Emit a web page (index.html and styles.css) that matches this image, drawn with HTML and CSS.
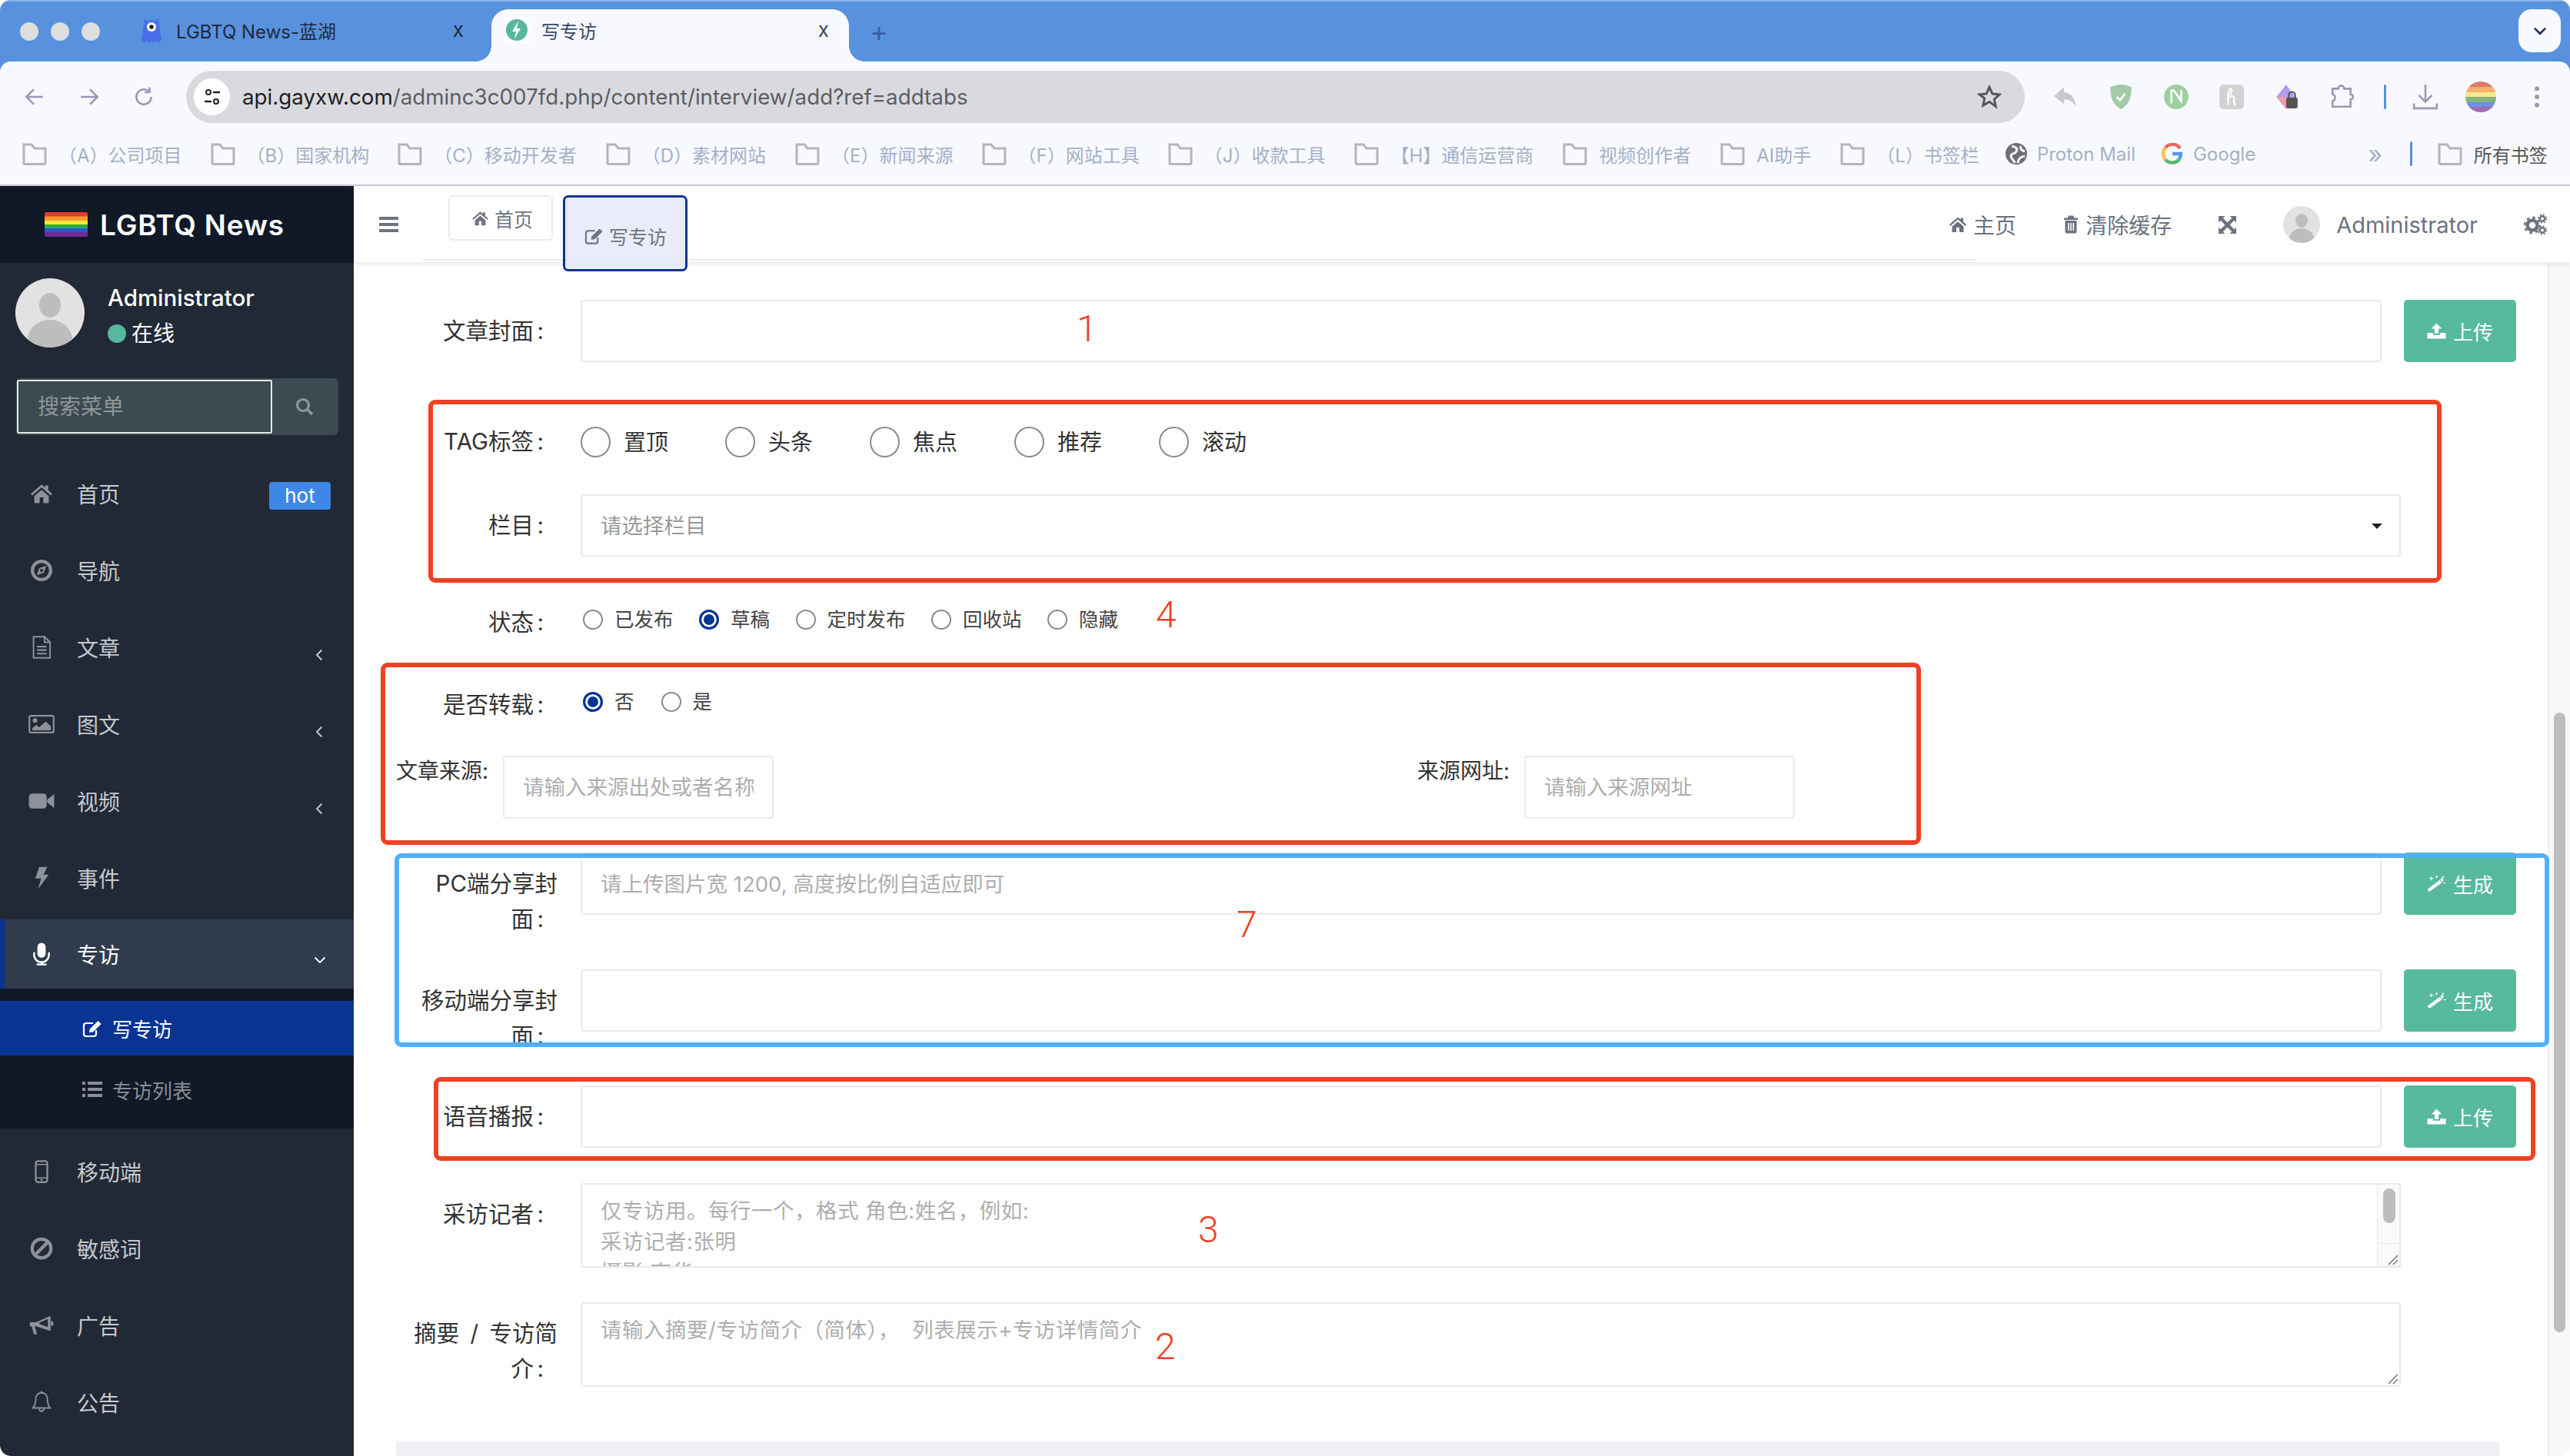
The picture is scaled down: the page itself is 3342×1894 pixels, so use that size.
FILE: index.html
```html
<!DOCTYPE html>
<html lang="zh-CN">
<head>
  <meta charset="UTF-8">
  <title>写专访</title>
  <link rel="stylesheet" href="styles.css">
</head>
<body>
  <svg class="sprite" xmlns="http://www.w3.org/2000/svg">
    <defs>
      <symbol id="i-home" viewBox="0 0 24 24"><path d="M12 2.500 0.800 12.300l1.500 1.700L12 5.600l9.700 8.400 1.500-1.700L19 8.600V3.500h-3.400v2.200z"/><path d="M4.500 14.600V22h5.600v-6h3.800v6h5.600v-7.400L12 8.200z"/></symbol>
      <symbol id="i-compass" viewBox="0 0 24 24"><circle cx="12" cy="12" r="9.500" fill="none" stroke="currentColor" stroke-width="3.400"/><path d="M17 7l-2.600 7.400L7 17l2.600-7.400zM12 10.400a1.600 1.600 0 1 0 0 3.200 1.600 1.600 0 0 0 0-3.200z" fill-rule="evenodd"/></symbol>
      <symbol id="i-file" viewBox="2.500 0.500 19 23"><path d="M4 1.500h11l5.500 5.500v15.500H4z M15 1.500V7h5.500" fill="none" stroke="currentColor" stroke-width="1.500"/><path d="M7.500 10.500h9.500v1.600H7.500zM7.500 14h9.500v1.600H7.500zM7.500 17.500h9.500v1.600H7.500z"/></symbol>
      <symbol id="i-picture" viewBox="0 0 28 20"><rect x="1" y="1" width="26" height="18" rx="1.500" fill="none" stroke="currentColor" stroke-width="1.800"/><circle cx="7" cy="6" r="2.400"/><path d="M4 16.500v-2.200l4.500-3.500 3 2.400 7-6 5.500 5v4.300z"/></symbol>
      <symbol id="i-video" viewBox="0 0 28 18"><rect x="0.500" y="1" width="19" height="16" rx="3.500"/><path d="M20 7.500 27.500 1.500v15L20 10.500z"/></symbol>
      <symbol id="i-bolt" viewBox="0 0 16 24"><path d="M5.500 0.500h8.500L10 8.500h5.500L4.500 23.500 7.500 12.500H1.500z"/></symbol>
      <symbol id="i-mic" viewBox="0 0 24 28"><rect x="7" y="0.500" width="10" height="18" rx="5"/><path d="M3 12v3a9 9 0 0 0 18 0v-3M12 24v2.500M6 26.700h12" fill="none" stroke="currentColor" stroke-width="2.200"/></symbol>
      <symbol id="i-edit" viewBox="0 0 26 24"><path d="M18 14v5a3 3 0 0 1-3 3H5a3 3 0 0 1-3-3V8a3 3 0 0 1 3-3h9" fill="none" stroke="currentColor" stroke-width="2.200"/><path d="M9 17l0.800-4.500L20.500 2l4 4L14 16.500z"/></symbol>
      <symbol id="i-list" viewBox="0 0 26 24"><path d="M0 2h4v4H0zM7 2h19v4H7zM0 10h4v4H0zM7 10h19v4H7zM0 18h4v4H0zM7 18h19v4H7z"/></symbol>
      <symbol id="i-mobile" viewBox="0 0 14 24"><rect x="1" y="1" width="12" height="22" rx="2.400" fill="none" stroke="currentColor" stroke-width="1.800"/><path d="M1 4.500h12M1 18.500h12" stroke="currentColor" stroke-width="1.200"/><circle cx="7" cy="20.800" r="1.100"/></symbol>
      <symbol id="i-ban" viewBox="0 0 24 24"><circle cx="12" cy="12" r="9.800" fill="none" stroke="currentColor" stroke-width="3.400"/><path d="M5.500 18.500 18.500 5.500" stroke="currentColor" stroke-width="3.400"/></symbol>
      <symbol id="i-horn" viewBox="0 0 28 24"><path d="M1 8.500h7L24 1.500v17l-16-5.500H6.500l2.500 9H5.500L3 13H1z"/><path d="M24.500 7c1.800 0 2.800 1.200 2.800 3s-1 3-2.800 3z"/><path d="M21 5 11.500 9v1.500L21 14z" fill="#222936"/></symbol>
      <symbol id="i-bell" viewBox="0 0 24 28"><path d="M12 2.500a7 7 0 0 0-7 7c0 6-1.500 9-3.500 11.500h21C20.500 18.500 19 15.500 19 9.500a7 7 0 0 0-7-7z" fill="none" stroke="currentColor" stroke-width="1.800"/><path d="M12 0.500v2.500M9 22a3 3 0 0 0 6 0" fill="none" stroke="currentColor" stroke-width="1.800"/></symbol>
      <symbol id="i-trash" viewBox="0 0 20 24"><path d="M7 0.500h6l1.500 3H19V6H1V3.500h4.500z"/><path d="M2.500 7h15v14a2.500 2.500 0 0 1-2.500 2.500H5A2.500 2.500 0 0 1 2.500 21zM6 10v10h1.600V10zM9.200 10v10h1.600V10zM12.400 10v10H14V10z" fill-rule="evenodd"/></symbol>
      <symbol id="i-expand" viewBox="0 0 24 24"><path d="M1 1h8L6.500 3.500 20.500 17.500 23 15v8h-8l2.500-2.500L3.500 6.500 1 9z"/><path d="M23 1v8l-2.500-2.500L6.500 20.500 9 23H1v-8l2.500 2.500L17.500 3.500 15 1z"/></symbol>
      <symbol id="i-cogs" viewBox="0 0 30 28"><circle cx="11" cy="15" r="6.500" fill="none" stroke="currentColor" stroke-width="4.500"/><circle cx="11" cy="15" r="10" fill="none" stroke="currentColor" stroke-width="2.800" stroke-dasharray="3.500 4.350"/><circle cx="24" cy="6.500" r="3.200" fill="none" stroke="currentColor" stroke-width="2.400"/><circle cx="24" cy="6.500" r="5.200" fill="none" stroke="currentColor" stroke-width="1.800" stroke-dasharray="2 2.100"/><circle cx="24" cy="21.500" r="3.200" fill="none" stroke="currentColor" stroke-width="2.400"/><circle cx="24" cy="21.500" r="5.200" fill="none" stroke="currentColor" stroke-width="1.800" stroke-dasharray="2 2.100"/></symbol>
      <symbol id="i-upload" viewBox="0 0 24 20"><path d="M12 0.500l6.500 6.500h-4v6h-5V7h-4z"/><path d="M0.500 12.500h7V15h9v-2.500h7V19.500H0.500z"/></symbol>
      <symbol id="i-magic" viewBox="0 0 24 20"><path d="M0.500 17l15.500-11.500 3 3L3 20z"/><path d="M16.500 4.500l2-1.500 2.500 2.500-1.500 2z"/><path d="M3 3.500h5M5.500 1v5M10.500 1.500h3M12 0v3M20 0.500v3M18.500 2h3M20.500 9h3" stroke="currentColor" stroke-width="1"/></symbol>
      <symbol id="i-search" viewBox="0 0 24 24"><circle cx="10" cy="10" r="7.500" fill="none" stroke="currentColor" stroke-width="3.200"/><path d="M15.500 15.500 22 22" stroke="currentColor" stroke-width="3.800"/></symbol>
      <symbol id="i-folder" viewBox="0 0 32 30"><path d="M2 27V3h10l4 5h14v19a1.500 1.500 0 0 1-1.500 1.500h-25A1.500 1.500 0 0 1 2 27z" fill="none" stroke="currentColor" stroke-width="3"/></symbol>
      <symbol id="i-chev-left" viewBox="0 0 10 16"><path d="M8.500 1.500 2 8l6.500 6.500" fill="none" stroke="currentColor" stroke-width="1.800"/></symbol>
      <symbol id="i-chev-down" viewBox="0 0 16 10"><path d="M1.500 1.500 8 8l6.500-6.500" fill="none" stroke="currentColor" stroke-width="1.800"/></symbol>
      <symbol id="i-flag" viewBox="0 0 56 32"><path fill="#e63a2e" d="M0 2a2 2 0 0 1 2-2h52a2 2 0 0 1 2 2v4H0z"/><path fill="#f39a28" d="M0 5.500h56v6H0z"/><path fill="#f5e63a" d="M0 11h56v5.500H0z"/><path fill="#2fa84a" d="M0 16h56v5.500H0z"/><path fill="#2b55d6" d="M0 21h56v5.500H0z"/><path fill="#6f2a94" d="M0 26h56v4a2 2 0 0 1-2 2H2a2 2 0 0 1-2-2z"/></symbol>
    </defs>
  </svg>

  <div class="window">
    <div class="tabstrip">
      <div class="lights"><span></span><span></span><span></span></div>
      <div class="ctab">
        <svg class="fav" viewBox="0 0 26 36"><path fill="#4a6ee8" d="M4 3l4 4a8 8 0 0 1 10 0l4-4 1 8 3 20-4 4-3-3-3 3-3-3-3 3-3-3-3 3-4-4L3 11z"/><circle cx="13" cy="14" r="6" fill="#fff"/><circle cx="13" cy="14" r="2.800" fill="#222"/></svg>
        <span class="ctab-title">LGBTQ News-蓝湖</span>
        <span class="ctab-x">x</span>
      </div>
      <div class="ctab ctab-on">
        <svg class="fav fav-sq" viewBox="0 0 30 36"><rect width="30" height="36" fill="#fff"/><circle cx="15" cy="18" r="14" fill="#56b89c"/><path fill="#fff" d="M17 6l-8 14h5l-2 10 8-14h-5z"/></svg>
        <span class="ctab-title">写专访</span>
        <span class="ctab-x">x</span>
      </div>
      <span class="newtab">+</span>
      <span class="tabmenu"><svg viewBox="0 0 16 10"><path d="M1.500 1.500 8 8l6.500-6.500" fill="none" stroke="#22345c" stroke-width="2.400"/></svg></span>
    </div>

    <div class="chrome">
      <div class="toolbar">
        <svg class="nav-ico" viewBox="0 0 26 26"><path d="M23 13H4M12 4l-9 9 9 9" fill="none" stroke="#9a98b4" stroke-width="2.400"/></svg>
        <svg class="nav-ico" viewBox="0 0 26 26"><path d="M3 13h19M14 4l9 9-9 9" fill="none" stroke="#9a98b4" stroke-width="2.400"/></svg>
        <svg class="nav-ico" viewBox="0 0 26 26"><path d="M22 13a9 9 0 1 1-3-6.700M20 1.500v6h-6" fill="none" stroke="#9a98b4" stroke-width="2.400"/></svg>
        <div class="omnibox">
          <span class="site-ico"><svg viewBox="0 0 24 24"><circle cx="7" cy="6" r="3" fill="none" stroke="#222" stroke-width="2"/><path d="M13 6h9M2 18h9" stroke="#222" stroke-width="2.400"/><circle cx="17" cy="18" r="3" fill="none" stroke="#222" stroke-width="2"/></svg></span>
          <span class="url"><b>api.gayxw.com</b>/adminc3c007fd.php/content/interview/add?ref=addtabs</span>
          <svg class="star" viewBox="0 0 24 24"><path d="M12 2.500l2.900 6.400 6.900.8-5.100 4.700 1.400 6.900L12 16.800l-6.100 3.500 1.400-6.900L2.200 9.700l6.900-.8z" fill="none" stroke="#555" stroke-width="2.200"/></svg>
        </div>
        <div class="exts">
          <svg class="ext" viewBox="0 0 32 32"><path fill="#c9c9cb" d="M14 4 2 15l12 10v-6c7 0 11 3 15 9-1-10-6-17-15-18z"/></svg>
          <svg class="ext" viewBox="0 0 32 32"><path fill="#a3cba6" d="M16 1c5 0 10 2 13 3 0 12-3 22-13 27C6 26 3 16 3 4c3-1 8-3 13-3z"/><path d="M11 16l4 4 6-8" fill="none" stroke="#fff" stroke-width="2.400"/></svg>
          <svg class="ext" viewBox="0 0 32 32"><circle cx="16" cy="16" r="15" fill="#9fcf9e"/><path d="M9 8h4l9 13V8M10 8v16" fill="none" stroke="#fff" stroke-width="2.400"/></svg>
          <svg class="ext" viewBox="0 0 32 32"><rect x="1" y="1" width="30" height="30" rx="5" fill="#d2d2d2"/><path d="M14 6c-3 5-3 14-2 20M12 18c3-4 7-4 7 0 0 3-1 6 2 8M14 6c3 0 3 5-1 8" fill="none" stroke="#fff" stroke-width="2"/></svg>
          <svg class="ext" viewBox="0 0 32 32"><path fill="#b49cf2" d="M15 1l11 15-11 15L3 16z"/><path fill="#f29ca8" d="M3 16l12 15V16z"/><rect x="15" y="17" width="14" height="13" rx="2" fill="#555"/><path d="M18 17v-3a4 4 0 0 1 8 0v3" fill="none" stroke="#555" stroke-width="2"/></svg>
          <svg class="ext" viewBox="0 0 32 32"><path d="M4 6h7c0-5 7-5 7 0h8v7c4 0 4 6 0 6v9H4v-7c4 0 4-8 0-8z" fill="none" stroke="#9a98b4" stroke-width="2.400"/></svg>
          <span class="tool-sep"></span>
          <svg class="ext" viewBox="0 0 32 32"><path d="M16 1v21M8 14l8 8 8-8M2 24v6h28v-6" fill="none" stroke="#9a98b4" stroke-width="2.400"/></svg>
          <svg class="ext ext-wide" viewBox="0 0 40 40"><defs><clipPath id="ball"><circle cx="20" cy="20" r="20"/></clipPath></defs><g clip-path="url(#ball)"><rect width="40" height="7" fill="#e0786c"/><rect y="7" width="40" height="7" fill="#f2b06e"/><rect y="14" width="40" height="6" fill="#f4ea8e"/><rect y="20" width="40" height="7" fill="#85b47c"/><rect y="27" width="40" height="7" fill="#6d8fe8"/><rect y="33" width="40" height="7" fill="#a06cb4"/></g></svg>
          <svg class="ext" viewBox="0 0 32 32"><circle cx="16" cy="6" r="2.800" fill="#9a98b4"/><circle cx="16" cy="16" r="2.800" fill="#9a98b4"/><circle cx="16" cy="26" r="2.800" fill="#9a98b4"/></svg>
        </div>
      </div>

      <div class="bookmarks">
        <a class="bm bm-a"><svg class="bm-ico"><use href="#i-folder"/></svg>（A）公司项目</a>
        <a class="bm bm-b"><svg class="bm-ico"><use href="#i-folder"/></svg>（B）国家机构</a>
        <a class="bm bm-c"><svg class="bm-ico"><use href="#i-folder"/></svg>（C）移动开发者</a>
        <a class="bm bm-d"><svg class="bm-ico"><use href="#i-folder"/></svg>（D）素材网站</a>
        <a class="bm bm-e"><svg class="bm-ico"><use href="#i-folder"/></svg>（E）新闻来源</a>
        <a class="bm bm-f"><svg class="bm-ico"><use href="#i-folder"/></svg>（F）网站工具</a>
        <a class="bm bm-j"><svg class="bm-ico"><use href="#i-folder"/></svg>（J）收款工具</a>
        <a class="bm bm-h"><svg class="bm-ico"><use href="#i-folder"/></svg>【H】通信运营商</a>
        <a class="bm bm-v"><svg class="bm-ico"><use href="#i-folder"/></svg>视频创作者</a>
        <a class="bm bm-ai"><svg class="bm-ico"><use href="#i-folder"/></svg>AI助手</a>
        <a class="bm bm-l"><svg class="bm-ico"><use href="#i-folder"/></svg>（L）书签栏</a>
        <a class="bm bm-p"><svg class="bm-fav" viewBox="0 0 28 28"><circle cx="14" cy="14" r="14" fill="#6f6f72"/><path d="M8 4c5 1 8 3 6 7s-7 2-7 6 4 5 5 9M20 4c-2 4 2 6 5 7M16 26c0-4 3-8 9-9" fill="none" stroke="#f7f9fe" stroke-width="3"/></svg>Proton Mail</a>
        <a class="bm bm-g"><svg class="bm-fav" viewBox="0 0 28 28"><path d="M24 7A12 12 0 0 0 5 6" fill="none" stroke="#ea6a5e" stroke-width="4.500"/><path d="M5 6a12 12 0 0 0 0 16" fill="none" stroke="#f2c34e" stroke-width="4.500"/><path d="M5 22a12 12 0 0 0 18-1" fill="none" stroke="#5cb872" stroke-width="4.500"/><path d="M14 14h11c0 3-1 5-2 7" fill="none" stroke="#5f94ee" stroke-width="4.500"/></svg>Google</a>
        <span class="bm-more">»</span>
        <span class="bm-sep"></span>
        <a class="bm bm-all"><svg class="bm-ico"><use href="#i-folder"/></svg>所有书签</a>
      </div>
    </div>

    <div class="admin">
      <aside class="sidebar">
        <div class="logo"><svg class="flag"><use href="#i-flag"/></svg><span>LGBTQ News</span></div>
        <div class="userpanel">
          <svg class="avatar" viewBox="0 0 90 90"><defs><clipPath id="av1"><circle cx="45" cy="45" r="45"/></clipPath></defs><g clip-path="url(#av1)"><rect width="90" height="90" fill="#e2e2e2"/><ellipse cx="45" cy="35" rx="14" ry="16" fill="#bdbdbd"/><ellipse cx="45" cy="80" rx="29" ry="26" fill="#bdbdbd"/></g></svg>
          <div class="userinfo">
            <div class="username">Administrator</div>
            <div class="online"><i></i>在线</div>
          </div>
        </div>
        <div class="sidesearch">
          <input type="text" placeholder="搜索菜单">
          <svg class="sidesearch-ico"><use href="#i-search"/></svg>
        </div>
        <ul class="menu">
          <li class="item"><svg class="mi"><use href="#i-home"/></svg><span>首页</span><em class="hot">hot</em></li>
          <li class="item"><svg class="mi"><use href="#i-compass"/></svg><span>导航</span></li>
          <li class="item"><svg class="mi"><use href="#i-file"/></svg><span>文章</span><svg class="chev"><use href="#i-chev-left"/></svg></li>
          <li class="item"><svg class="mi mi-wide"><use href="#i-picture"/></svg><span>图文</span><svg class="chev"><use href="#i-chev-left"/></svg></li>
          <li class="item"><svg class="mi mi-wide"><use href="#i-video"/></svg><span>视频</span><svg class="chev"><use href="#i-chev-left"/></svg></li>
          <li class="item"><svg class="mi"><use href="#i-bolt"/></svg><span>事件</span></li>
          <li class="item item-on"><svg class="mi"><use href="#i-mic"/></svg><span>专访</span><svg class="chev-d"><use href="#i-chev-down"/></svg></li>
          <li class="submenu">
            <div class="sub sub-on"><svg class="si"><use href="#i-edit"/></svg>写专访</div>
            <div class="sub"><svg class="si"><use href="#i-list"/></svg>专访列表</div>
          </li>
          <li class="item item-after"><svg class="mi"><use href="#i-mobile"/></svg><span>移动端</span></li>
          <li class="item"><svg class="mi"><use href="#i-ban"/></svg><span>敏感词</span></li>
          <li class="item"><svg class="mi mi-wide"><use href="#i-horn"/></svg><span>广告</span></li>
          <li class="item"><svg class="mi"><use href="#i-bell"/></svg><span>公告</span></li>
        </ul>
      </aside>

      <main class="main">
        <header class="navbar">
          <svg class="burger" viewBox="0 0 25 20"><path d="M0 0h25v4H0zM0 8h25v4H0zM0 16h25v4H0z"/></svg>
          <div class="pagetabs">
            <span class="ptab"><svg class="ptab-ico"><use href="#i-home"/></svg>首页</span>
            <span class="ptab ptab-on"><svg class="ptab-ico"><use href="#i-edit"/></svg>写专访</span>
          </div>
          <nav class="navright">
            <span class="nr nr-home"><svg class="nr-ico"><use href="#i-home"/></svg>主页</span>
            <span class="nr nr-clear"><svg class="nr-ico nr-ico-trash"><use href="#i-trash"/></svg>清除缓存</span>
            <svg class="nr-full"><use href="#i-expand"/></svg>
            <svg class="nr-avatar" viewBox="0 0 48 48"><defs><clipPath id="av2"><circle cx="24" cy="24" r="24"/></clipPath></defs><g clip-path="url(#av2)"><rect width="48" height="48" fill="#e2e2e2"/><ellipse cx="24" cy="19" rx="8" ry="9" fill="#bdbdbd"/><ellipse cx="24" cy="43" rx="16" ry="14" fill="#bdbdbd"/></g></svg>
            <span class="nr nr-user">Administrator</span>
            <svg class="nr-cogs"><use href="#i-cogs"/></svg>
          </nav>
        </header>

        <div class="body">
          <form class="form">
            <div class="row row-cover">
              <label class="lb">文章封面<i class="co">:</i></label>
              <input class="ctl" type="text">
              <button class="btn" type="button"><svg class="btn-ico"><use href="#i-upload"/></svg>上传</button>
            </div>

            <div class="row row-tag row-mid">
              <label class="lb lb-flat lb-tag">TAG标签<i class="co">:</i></label>
              <div class="opts-big">
                <label class="opt"><input type="radio" name="tag">置顶</label>
                <label class="opt"><input type="radio" name="tag">头条</label>
                <label class="opt"><input type="radio" name="tag">焦点</label>
                <label class="opt"><input type="radio" name="tag">推荐</label>
                <label class="opt"><input type="radio" name="tag">滚动</label>
              </div>
            </div>

            <div class="row row-col">
              <label class="lb">栏目<i class="co">:</i></label>
              <div class="selectwrap">
                <select class="ctl"><option>请选择栏目</option></select>
              </div>
            </div>

            <div class="row row-status row-mid">
              <label class="lb lb-flat lb-low">状态<i class="co">:</i></label>
              <div class="opts">
                <label class="opt"><input type="radio" name="status">已发布</label>
                <label class="opt"><input type="radio" name="status" checked>草稿</label>
                <label class="opt"><input type="radio" name="status">定时发布</label>
                <label class="opt"><input type="radio" name="status">回收站</label>
                <label class="opt"><input type="radio" name="status">隐藏</label>
              </div>
            </div>

            <div class="row row-repost row-mid">
              <label class="lb lb-flat lb-low">是否转载<i class="co">:</i></label>
              <div class="opts opts-wide">
                <label class="opt"><input type="radio" name="repost" checked>否</label>
                <label class="opt"><input type="radio" name="repost">是</label>
              </div>
            </div>

            <div class="row row-source">
              <div class="srccol">
                <label class="lb-src">文章来源:</label>
                <input class="ctl ctl-src" type="text" placeholder="请输入来源出处或者名称">
              </div>
              <div class="srccol">
                <label class="lb-src">来源网址:</label>
                <input class="ctl ctl-src" type="text" placeholder="请输入来源网址">
              </div>
            </div>

            <div class="row row-pc">
              <label class="lb">PC端分享封<br>面<i class="co">:</i></label>
              <input class="ctl" type="text" placeholder="请上传图片宽 1200, 高度按比例自适应即可">
              <button class="btn" type="button"><svg class="btn-ico"><use href="#i-magic"/></svg>生成</button>
            </div>

            <div class="row row-mobile">
              <label class="lb">移动端分享封<br>面<i class="co">:</i></label>
              <input class="ctl" type="text">
              <button class="btn" type="button"><svg class="btn-ico"><use href="#i-magic"/></svg>生成</button>
            </div>

            <div class="row row-audio">
              <label class="lb">语音播报<i class="co">:</i></label>
              <input class="ctl" type="text">
              <button class="btn" type="button"><svg class="btn-ico"><use href="#i-upload"/></svg>上传</button>
            </div>

            <div class="row row-reporter">
              <label class="lb">采访记者<i class="co">:</i></label>
              <div class="areawrap">
                <textarea class="ctl area" placeholder="仅专访用。每行一个，格式 角色:姓名，例如:&#10;采访记者:张明&#10;摄影:李华"></textarea>
                <div class="area-bar"><span class="area-thumb"></span></div>
                <svg class="grip" viewBox="0 0 14 14"><path d="M13 1 1 13M13 7l-6 6" stroke="#666" stroke-width="1.300"/></svg>
              </div>
            </div>

            <div class="row row-summary">
              <label class="lb lb-summary">摘要 / 专访简<br>介<i class="co">:</i></label>
              <div class="areawrap">
                <textarea class="ctl area" placeholder="请输入摘要/专访简介（简体），  列表展示+专访详情简介"></textarea>
                <svg class="grip" viewBox="0 0 14 14"><path d="M13 1 1 13M13 7l-6 6" stroke="#666" stroke-width="1.300"/></svg>
              </div>
            </div>

            <div class="footbar"></div>
          </form>
          <div class="pagebar"><span class="pagebar-thumb"></span></div>
        </div>
      </main>
    </div>

    <!-- hand-drawn review marks on top of the screenshot -->
    <div class="mark mark-tag"></div>
    <div class="mark mark-repost"></div>
    <div class="mark mark-blue"></div>
    <div class="mark mark-audio"></div>
    <span class="num num-1">1</span>
    <span class="num num-4">4</span>
    <span class="num num-7">7</span>
    <span class="num num-3">3</span>
    <span class="num num-2">2</span>
  </div>
</body>
</html>
```

FILE: styles.css
```css
/* Page and window */
* {
  box-sizing: border-box;
}

body {
  margin: 0;
  background: #ffffff;
  font-family: Inter, "Noto Sans CJK SC", sans-serif;
  color: #333333;
}

ul {
  list-style: none;
  margin: 0;
  padding: 0;
}

.sprite {
  position: absolute;
  width: 0;
  height: 0;
}

svg {
  fill: currentColor;
  flex: none;
}

.window {
  position: relative;
  width: 3342px;
  height: 1894px;
  overflow: hidden;
  border-radius: 14px;
  background: #ffffff;
}

/* Browser tab strip */
.tabstrip {
  display: flex;
  align-items: flex-end;
  height: 94px;
  margin-bottom: -14px;
  padding-bottom: 14px;
  background: #5891de;
  border-top: 2px solid #8db3ec;
}

.lights {
  display: flex;
  gap: 16px;
  align-self: flex-start;
  margin: 27px 0 0 26px;
}

.lights span {
  width: 24px;
  height: 24px;
  border-radius: 50%;
  background: #dedede;
}

.ctab {
  display: flex;
  align-items: center;
  width: 473px;
  height: 68px;
  padding: 0 36px 14px 18px;
  font-size: 24px;
  color: #1f2a3c;
}

.lights + .ctab {
  margin-left: 36px;
}

.ctab-on {
  position: relative;
  width: 465px;
  padding-right: 26px;
  background: #f7f9fe;
  border-radius: 22px 22px 0 0;
  color: #3a4a68;
}

.ctab-on::before,
.ctab-on::after {
  content: "";
  position: absolute;
  bottom: 0;
  width: 20px;
  height: 20px;
}

.ctab-on::before {
  left: -20px;
  background: radial-gradient(circle at 0 0, transparent 19.5px, #f7f9fe 20px);
}

.ctab-on::after {
  right: -20px;
  background: radial-gradient(circle at 100% 0, transparent 19.5px, #f7f9fe 20px);
}

.fav {
  width: 26px;
  height: 36px;
  margin-right: 19px;
}

.fav-sq {
  width: 30px;
  margin-right: 17px;
}

.ctab-title {
  flex: 1;
}

.ctab-x {
  font-size: 26px;
  line-height: 1;
}

.newtab {
  align-self: flex-start;
  margin: 19px 0 0 27px;
  font-size: 36px;
  line-height: 40px;
  color: #3a5ea8;
}

.tabmenu {
  display: flex;
  align-items: center;
  justify-content: center;
  align-self: flex-start;
  width: 55px;
  height: 56px;
  margin: 10px 12px 0 auto;
  background: #f7f9fe;
  border-radius: 17px;
}

.tabmenu svg {
  width: 18px;
  height: 11px;
}

/* Toolbar and bookmarks */
.chrome {
  position: relative;
  height: 162px;
  background: #f7f9fe;
  border-radius: 14px 14px 0 0;
  border-bottom: 2px solid #c9c7d9;
}

.toolbar {
  display: flex;
  align-items: center;
  height: 92px;
  padding-left: 31px;
}

.nav-ico {
  width: 28px;
  height: 28px;
  margin-right: 43px;
}

.nav-ico:nth-child(3) {
  margin-right: 0;
}

.omnibox {
  display: flex;
  align-items: center;
  flex: none;
  width: 2391px;
  height: 68px;
  margin-left: 41px;
  padding: 0 30px 0 10px;
  border-radius: 34px;
  background: #d9dadf;
}

.site-ico {
  display: flex;
  align-items: center;
  justify-content: center;
  width: 47px;
  height: 48px;
  border-radius: 50%;
  background: #ffffff;
}

.site-ico svg {
  width: 24px;
  height: 24px;
}

.url {
  flex: 1;
  margin-left: 16px;
  font-size: 27.75px;
  color: #5c5d62;
}

.url b {
  font-weight: 400;
  color: #1e1e22;
}

.star {
  width: 32px;
  height: 32px;
}

.exts {
  display: flex;
  align-items: center;
  flex: none;
  margin-left: 36px;
}

.ext {
  width: 34px;
  height: 34px;
  margin-right: 38px;
}

.ext-wide {
  width: 40px;
  height: 40px;
  margin-left: -3px;
  margin-right: 36px;
}

.tool-sep {
  width: 3px;
  height: 32px;
  margin: 0 34px 0 -1px;
  background: #5891de;
  border-radius: 2px;
}

.bookmarks {
  display: flex;
  align-items: center;
  height: 68px;
  padding: 0 0 12px 29px;
  font-size: 24px;
  color: #a5b0c6;
}

.bm {
  display: flex;
  align-items: center;
  white-space: nowrap;
}

.bm-ico {
  width: 32px;
  height: 30px;
  margin-right: 15px;
  color: #b4b5ba;
}

.bm-fav {
  width: 28px;
  height: 28px;
  margin-right: 13px;
}

.bm-b { margin-left: 37px; }
.bm-c { margin-left: 37px; }
.bm-d { margin-left: 38px; }
.bm-e { margin-left: 38px; }
.bm-f { margin-left: 37px; }
.bm-j { margin-left: 37px; }
.bm-h { margin-left: 38px; }
.bm-v { margin-left: 38px; }
.bm-ai { margin-left: 38px; }
.bm-l { margin-left: 38px; }
.bm-p { margin-left: 34px; }
.bm-g { margin-left: 34px; }

.bm-more {
  margin-left: 146px;
  font-size: 32px;
  color: #a5b0c6;
}

.bm-sep {
  width: 3px;
  height: 32px;
  margin-left: 36px;
  background: #5891de;
  border-radius: 2px;
}

.bm-all {
  margin-left: 33px;
  color: #555555;
}

/* Admin layout */
.admin {
  display: flex;
  height: 1652px;
}

.sidebar {
  width: 460px;
  flex: none;
  background: #222936;
  border-radius: 0 0 0 14px;
  overflow: hidden;
  color: #c6c9cf;
}

.logo {
  display: flex;
  align-items: center;
  height: 100px;
  padding-left: 58px;
  background: #111827;
  font-size: 37px;
  font-weight: 600;
  letter-spacing: 0.8px;
  color: #ffffff;
}

.flag {
  width: 56px;
  height: 32px;
  margin-right: 16px;
}

.userpanel {
  display: flex;
  align-items: center;
  gap: 30px;
  height: 90px;
  margin: 20px 0 0 20px;
}

.userinfo {
  padding-top: 7px;
}

.avatar {
  width: 90px;
  height: 90px;
}

.username {
  font-size: 29.5px;
  line-height: 38px;
  font-weight: 500;
  color: #ffffff;
}

.online {
  display: flex;
  align-items: center;
  gap: 7px;
  margin-top: 9px;
  font-size: 28px;
  line-height: 38px;
  color: #ffffff;
}

.online i {
  width: 24px;
  height: 24px;
  border-radius: 50%;
  background: #56b89c;
}

.sidesearch {
  display: flex;
  align-items: center;
  width: 419px;
  height: 74px;
  margin: 40px 0 26px 21px;
  padding: 2px 0 2px 1px;
  border-radius: 6px;
  background: #3c4a52;
}

.sidesearch input {
  width: 332px;
  height: 70px;
  padding: 0 25px;
  border: 2px solid #e6e6e6;
  border-radius: 2px;
  outline: none;
  background: transparent;
  font: 28px Inter, "Noto Sans CJK SC", sans-serif;
}

.sidesearch input::placeholder {
  color: #8f9696;
}

.sidesearch-ico {
  width: 24px;
  height: 24px;
  margin-left: 30px;
  color: #8f9696;
}

.item {
  position: relative;
  display: flex;
  align-items: center;
  height: 100px;
  padding-left: 30px;
  font-size: 28px;
}

.mi {
  width: 30px;
  height: 30px;
  margin: 0 31px 0 9px;
  color: #8d9198;
}

.mi-wide {
  width: 34px;
  height: 28px;
  margin: 0 29px 0 7px;
}

.hot {
  position: absolute;
  right: 30px;
  top: 35px;
  width: 80px;
  height: 36px;
  border-radius: 4px;
  background: #3d87e6;
  font-style: normal;
  font-size: 26px;
  line-height: 35px;
  text-align: center;
  color: #ffffff;
}

.chev {
  position: absolute;
  left: 410px;
  top: 52px;
  width: 10px;
  height: 16px;
}

.item-on {
  height: 90px;
  margin-top: 4px;
  background: #303c4d;
  border-left: 6px solid #0a3494;
  padding-left: 24px;
  color: #ffffff;
}

.item-on .mi {
  color: #ffffff;
}

.chev-d {
  position: absolute;
  left: 402px;
  top: 48px;
  width: 16px;
  height: 10px;
}

.submenu {
  padding: 16px 0 0;
  height: 182px;
  background: #111827;
}

.sub {
  display: flex;
  align-items: center;
  height: 71px;
  padding-left: 107px;
  font-size: 26px;
  color: #8a8e96;
}

.sub + .sub {
  height: 88px;
}

.sub-on {
  background: #0a3494;
  color: #ffffff;
}

.si {
  width: 26px;
  height: 24px;
  margin-right: 13px;
}

.item-after {
  margin-top: 6px;
}

/* Top bar of the admin page */
.main {
  display: flex;
  flex-direction: column;
  flex: 1;
  min-width: 0;
}

.navbar {
  position: relative;
  display: flex;
  align-items: flex-start;
  height: 100px;
  flex: none;
  border-bottom: 1px solid #eceef2;
  box-shadow: 0 3px 5px rgba(0, 0, 0, 0.06);
  color: #6f7580;
}

.navbar::after {
  content: "";
  position: absolute;
  left: 90px;
  bottom: 2px;
  width: 2019px;
  height: 2px;
  background: #e8e9ee;
}

.burger {
  width: 25px;
  height: 20px;
  margin: 40px 0 0 33px;
  color: #6b7280;
}

.pagetabs {
  display: flex;
  gap: 13px;
  margin: 12px 0 0 65px;
}

.ptab {
  display: flex;
  align-items: center;
  height: 59px;
  padding: 0 24px 0 28px;
  border: 2px solid #e9eaef;
  border-radius: 6px;
  font-size: 25px;
}

.ptab-ico {
  width: 23px;
  height: 22px;
  margin-right: 7px;
}

.ptab-on {
  position: relative;
  z-index: 1;
  height: 99px;
  padding: 6px 24px 0 25px;
  border: 3px solid #0a3494;
  background: rgba(226, 231, 247, 0.75);
  border-radius: 7px;
}

.ptab-on .ptab-ico {
  width: 25px;
  height: 26px;
}

.navright {
  display: flex;
  align-items: center;
  height: 100px;
  margin-left: auto;
  padding: 0 30px 0 0;
  font-size: 28px;
  color: #6b7280;
}

.nr {
  display: flex;
  align-items: center;
}

.nr-ico {
  width: 24px;
  height: 24px;
  margin-right: 8px;
}

.nr-ico-trash {
  width: 20px;
  margin-right: 9px;
}

.nr-clear {
  margin-left: 61px;
}

.nr-full {
  width: 25px;
  height: 25px;
  margin-left: 60px;
}

.nr-avatar {
  width: 48px;
  height: 48px;
  margin-left: 60px;
}

.nr-user {
  margin-left: 21px;
  font-size: 29px;
}

.nr-cogs {
  width: 30px;
  height: 28px;
  margin-left: 60px;
}

/* Form */
.body {
  display: flex;
  flex: 1;
  min-height: 0;
}

.form {
  flex: 1;
  padding: 48px 41px 0 55px;
  overflow: hidden;
}

.row {
  display: flex;
  align-items: flex-start;
}

.row-mid {
  align-items: center;
}

.row-tag { margin-top: 82px; height: 40px; }
.row-col { margin-top: 50px; }
.row-status { margin-top: 66px; height: 26px; }
.row-repost { margin-top: 81px; height: 26px; }
.row-source { margin-top: 60px; }
.row-pc { margin-top: 44px; }
.row-mobile { margin-top: 71px; }
.row-audio { margin-top: 70px; }
.row-reporter { margin-top: 46px; }
.row-summary { margin-top: 45px; }

.row-mobile,
.row-pc,
.row-audio,
.row-cover {
  height: 81px;
}

.lb {
  flex: none;
  width: 210px;
  margin-right: 30px;
  padding-top: 17px;
  font-size: 29.5px;
  line-height: 46px;
  text-align: right;
  color: #333333;
}

.lb-flat {
  padding-top: 0;
}

.lb-tag {
  padding-top: 2px;
}

.lb-low {
  padding-top: 11px;
}

.lb-summary {
  word-spacing: 6px;
}

.co {
  display: inline-block;
  width: 11px;
  margin-right: 18px;
  margin-left: 2px;
  font-style: normal;
  text-align: right;
}

.ctl {
  flex: 1;
  min-width: 0;
  height: 81px;
  padding: 0 24px;
  border: 2px solid #e8e9ee;
  border-radius: 4px;
  outline: none;
  background: #ffffff;
  font: 27.5px Inter, "Noto Sans CJK SC", sans-serif;
  color: #999999;
}

.ctl::placeholder {
  color: #aeaeae;
}

.btn {
  display: flex;
  align-items: center;
  justify-content: center;
  flex: none;
  width: 146px;
  height: 81px;
  margin-left: 29px;
  border: none;
  border-radius: 5px;
  background: #57b99e;
  font: 26px Inter, "Noto Sans CJK SC", sans-serif;
  color: #ffffff;
}

.btn-ico {
  width: 25px;
  height: 21px;
  margin-right: 9px;
}

.selectwrap {
  position: relative;
  flex: 1;
  display: flex;
  margin-right: 150px;
}

.selectwrap::after {
  content: "";
  position: absolute;
  right: 24px;
  top: 38px;
  border: 7px solid transparent;
  border-top-color: #222222;
  border-bottom: none;
}

.selectwrap select {
  width: 100%;
  appearance: none;
}

input[type="radio"] {
  appearance: none;
  flex: none;
  margin: 0;
  border: 2px solid #8a8a8a;
  border-radius: 50%;
  background: #ffffff;
}

input[type="radio"]:checked {
  border: 3px solid #0a3494;
  box-shadow: inset 0 0 0 3px #ffffff;
  background: #0a3494;
}

.opt {
  display: flex;
  align-items: center;
  font-size: 25.5px;
  color: #444444;
}

.opts-big {
  display: flex;
}

.opts-big .opt {
  width: 188px;
  font-size: 29px;
  color: #333333;
}

.opts-big input[type="radio"] {
  width: 39px;
  height: 40px;
  margin: 4px 17px 0 0;
}

.opts {
  display: flex;
  gap: 33.5px;
  margin-left: 3px;
}

.opts-wide {
  gap: 35px;
}

.opts input[type="radio"] {
  width: 26px;
  height: 26px;
  margin: 6px 15px 0 0;
}

.srccol {
  display: flex;
  align-items: flex-start;
  width: 1328px;
}

.lb-src {
  flex: none;
  width: 122px;
  margin-right: 17px;
  font-size: 28px;
  line-height: 40px;
  white-space: nowrap;
}

.ctl-src {
  flex: none;
  width: 352px;
  height: 82px;
}

.areawrap {
  position: relative;
  flex: 1;
  display: flex;
  margin-right: 150px;
}

.area {
  display: block;
  width: 100%;
  height: 110px;
  padding: 14px 24px;
  line-height: 40px;
  letter-spacing: 0.5px;
  overflow: hidden;
  resize: none;
}

.area-bar {
  position: absolute;
  top: 2px;
  right: 2px;
  bottom: 2px;
  width: 29px;
  border-left: 1px solid #e8e9ee;
  background: #fafafa;
}

.area-thumb {
  display: block;
  width: 16px;
  height: 45px;
  margin: 5px 0 0 7px;
  border-radius: 8px;
  background: #bdbdbd;
}

.area-bar::after {
  content: "";
  position: absolute;
  left: 0;
  right: 0;
  bottom: 0;
  height: 29px;
  border-top: 1px solid #e8e9ee;
}

.grip {
  position: absolute;
  right: 3px;
  bottom: 3px;
  width: 14px;
  height: 14px;
}

.footbar {
  height: 40px;
  margin-top: 71px;
  margin-right: 22px;
  background: #eef0f4;
}

.pagebar {
  flex: none;
  width: 29px;
  border-left: 2px solid #ebebeb;
  background: #f8f8f8;
}

.pagebar-thumb {
  display: block;
  width: 15px;
  height: 806px;
  margin: 585px 0 0 6px;
  border-radius: 8px;
  background: #bdbdbd;
}

/* Review marks drawn over the page */
.mark {
  position: absolute;
  border: 6px solid #ee4123;
  border-radius: 9px;
}

.mark-tag { left: 557px; top: 520px; width: 2618px; height: 238px; }
.mark-repost { left: 495px; top: 862px; width: 2003px; height: 237px; }
.mark-blue { left: 513px; top: 1110px; width: 2802px; height: 252px; border-color: #4fb0f8; }
.mark-audio { left: 564px; top: 1401px; width: 2733px; height: 109px; }

.num {
  position: absolute;
  font-family: Roboto, sans-serif;
  font-size: 48px;
  font-weight: 300;
  line-height: 50px;
  color: #ee4123;
}

.num-1 { left: 1400px; top: 403px; }
.num-4 { left: 1503px; top: 775px; }
.num-7 { left: 1608px; top: 1178px; }
.num-3 { left: 1558px; top: 1575px; }
.num-2 { left: 1502px; top: 1727px; }
```
